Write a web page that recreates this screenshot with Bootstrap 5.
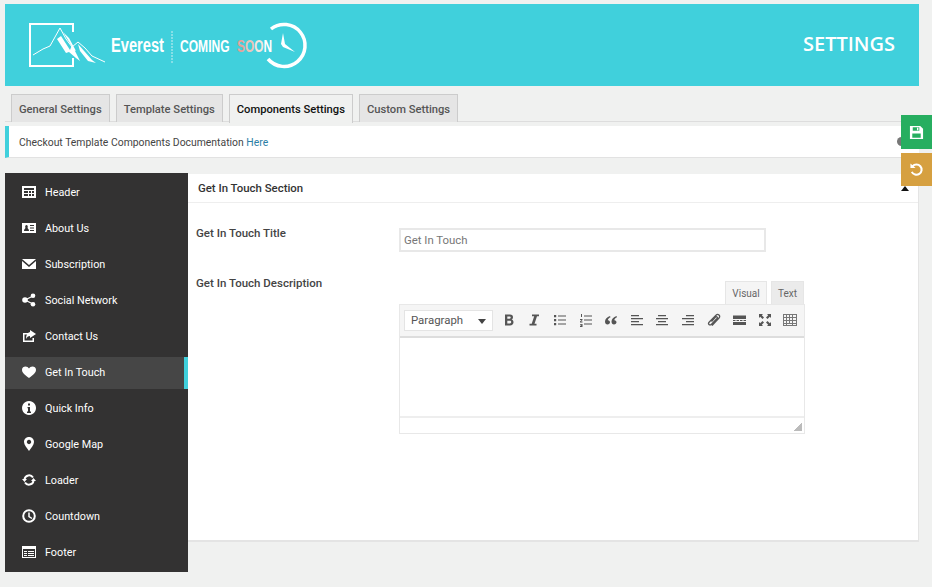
<!DOCTYPE html>
<html lang="en">
  <head>
    <meta charset="UTF-8" />
    <title>Settings</title>
    <link rel="stylesheet" href="https://cdn.jsdelivr.net/npm/bootstrap@5.3.3/dist/css/bootstrap.min.css" />
    <script src="https://cdn.jsdelivr.net/npm/bootstrap@5.3.3/dist/js/bootstrap.bundle.min.js"></script>
    <style>
      html, body { height: 587px; overflow: hidden; }
      body { background: #f0f1f0; font-family: Roboto, "Liberation Sans", sans-serif; font-size: 11px; color: #444; position: relative; }
      .page-wrap { width: 914px; margin: 4px 0 0 5px; }
      .top-banner { height: 82px; background: #40d0dc; color: #fff; padding: 0 24px 0 19px; }
      .banner-title { font-family: "Open Sans", sans-serif; font-size: 20px; font-weight: 600; margin-top: -2px; }
      .logo-narrow { font-family: "Liberation Sans", sans-serif; font-weight: 700; font-size: 17px; }
      .set-tabs { height: 36px; padding: 8px 0 0 6px; gap: 6px; border-bottom: 1px solid #ddd; }
      .set-tab { height: 28px; line-height: 29px; padding: 0 7px; background: #e5e5e5; border: 1px solid #ccc; border-bottom: 0; color: #555; font-weight: 500; font-size: 11.200px; white-space: nowrap; }
      .set-tab.on { background: #f0f1f0; color: #111; height: 29px; margin-bottom: -1px; }
      .doc-notice { height: 32px; margin-top: 4px; background: #fff; border-left: 4px solid #40d0dc; border-bottom: 1px solid #e2e2e2; padding-left: 10px; line-height: 33px; color: #444; font-size: 10.400px; }
      .doc-notice a { color: #2b7ea6; text-decoration: none; }
      .doc-dot { width: 9px; height: 9px; border-radius: 50%; background: #777; position: absolute; left: 897px; top: 137px; }
      .main-row { margin-top: 15px; }
      .side-menu { width: 183px; height: 399px; background: #333232; padding-top: 4px; flex: none; }
      .side-item { height: 32px; margin-bottom: 4px; padding: 0 0 2px 17px; gap: 9px; color: #fff; font-size: 10.800px; }
      .side-item span { padding-top: 2px; }
      .side-item svg { width: 14px; height: 14px; flex: none; }
      .side-item.on { background: #464646; border-right: 4px solid #40d0dc; }
      .right-panel { width: 731px; height: 368px; margin-top: 1px; background: #fff; border-right: 1px solid #e4e4e4; border-bottom: 2px solid #e4e4e4; position: relative; }
      .panel-head { height: 29px; line-height: 28px; padding-left: 10px; border-bottom: 1px solid #eee; font-weight: 500; font-size: 11.400px; color: #333; }
      .panel-arrow { position: absolute; left: 713px; top: 12px; width: 0; height: 0; border-left: 4px solid transparent; border-right: 4px solid transparent; border-bottom: 5px solid #111; }
      .field-row { padding-left: 8px; }
      .field-first { margin-top: 25px; }
      .field-second { margin-top: 29px; }
      .field-label { width: 203px; flex: none; font-weight: 500; font-size: 11.500px; color: #444; }
      .field-first .field-label { margin-top: -3px; }
      .field-second .field-label { margin-top: -6px; }
      .title-input { width: 367px; height: 24px; border: 2px solid #e8e8e8; padding: 0 3px; font-size: 11.400px; color: #777; line-height: 20px; }
      .ed-tabs { width: 405px; height: 23px; gap: 4px; }
      .ed-tab { height: 23px; line-height: 23px; width: 33px; text-align: center; font-size: 10px; color: #666; background: #ebebeb; border: 1px solid #e6e6e6; border-bottom: 0; }
      .ed-tab.on { background: #f5f5f5; width: 42px; }
      .ed-box { width: 406px; border: 1px solid #e8e8e8; }
      .ed-bar { height: 33px; background: #f5f5f5; border-bottom: 2px solid #ddd; padding-left: 4px; }
      .ed-select { width: 89px; height: 21px; flex: none; background: #fff; border: 1px solid #e4e4e4; color: #555; padding: 1px 6px 0; font-size: 11.400px; margin-right: 3px; }
      .ed-caret { width: 0; height: 0; border-left: 4px solid transparent; border-right: 4px solid transparent; border-top: 5px solid #444; }
      .ed-btn { width: 25.600px; text-align: center; flex: none; }
      .ed-btn svg { width: 14px; height: 14px; }
      .ed-body { height: 78px; background: #fff; }
      .ed-foot { height: 17px; border-top: 2px solid #eee; position: relative; }
      .ed-grip { position: absolute; right: 2px; bottom: 2px; width: 8px; height: 8px; background: linear-gradient(135deg, transparent 50%, #bbb 50%); }
      .float-btn { position: absolute; left: 901px; width: 31px; }
      .float-btn svg { width: 15px; height: 15px; }
      .float-save { top: 115px; height: 34px; background: #27ae60; }
      .float-reset { top: 153px; height: 33px; background: #d6a040; }
    </style>
  </head>
  <body>
    <div class="page-wrap">
      <header class="top-banner d-flex align-items-center justify-content-between">
        <svg width="285" height="50" viewBox="24 19 285 50" fill="none">
          <path d="M73 31V23H30V65H73V57" stroke="#fff" stroke-width="2" />
          <path d="M33 54L43 48 50 45 60 27 66 38 72 46 78 41 85 47 92 55 105 61" stroke="#fff" stroke-width="1" />
          <path d="M57 38L61 35 70 49 72 44 80 60 76 57 69 51 66 52zM63 31L69 37 76 50 74 49zM78 43L92 59 96 62 88 60 80 50z" fill="#fff" />
          <text x="111" y="51" font-family="Liberation Sans, sans-serif" font-weight="700" font-size="20" fill="#fff" textLength="53" lengthAdjust="spacingAndGlyphs">Everest</text>
          <path d="M172 30V62" stroke="#cdeff2" stroke-width="1" stroke-dasharray="2 1" />
          <text class="logo-narrow" transform="translate(180 51) scale(.71 1)" fill="#fff">COMING</text>
          <text class="logo-narrow" transform="translate(237 51) scale(.7 1)"><tspan fill="#e5a39a">S</tspan><tspan fill="#eac4b8">O</tspan><tspan fill="#f3e6df">O</tspan><tspan fill="#fff">N</tspan></text>
          <path d="M271 28A21 21 0 1 1 268 58" stroke="#fff" stroke-width="3.500" />
          <path d="M283 32l2 11 10 8-12-5-2-3z" fill="#fff" />
        </svg>
        <div class="banner-title">SETTINGS</div>
      </header>
      <nav class="set-tabs d-flex">
        <div class="set-tab">General Settings</div>
        <div class="set-tab">Template Settings</div>
        <div class="set-tab on">Components Settings</div>
        <div class="set-tab">Custom Settings</div>
      </nav>
      <div class="doc-notice">Checkout Template Components Documentation <a href="#">Here</a></div>
      <div class="main-row d-flex align-items-start">
        <div class="side-menu">
          <div class="side-item d-flex align-items-center">
            <svg viewBox="0 0 14 14"><path fill="#fff" fill-rule="evenodd" d="M0 1h14v12H0zM2 3v2h10V3zM2 6v2h4V6zM7 6v2h2V6zM10 6v2h2V6zM2 9v2h4V9zM7 9v2h2V9zM10 9v2h2V9z" /></svg>
            <span>Header</span>
          </div>
          <div class="side-item d-flex align-items-center">
            <svg viewBox="0 0 14 14"><path fill="#fff" fill-rule="evenodd" d="M0 2h14v10H0zM2 10h5c0-2-1-2-1.500-3 .8-1.500 0-3-1-3s-1.800 1.500-1 3C3 8 2 8 2 10zM8 4v1h4V4zM8 6.500v1h4v-1zM8 9v1h4V9z" /></svg>
            <span>About Us</span>
          </div>
          <div class="side-item d-flex align-items-center">
            <svg viewBox="0 0 14 14"><path fill="#fff" d="M0 2h14L7 8zM0 4l7 6 7-6v8H0z" /></svg>
            <span>Subscription</span>
          </div>
          <div class="side-item d-flex align-items-center">
            <svg viewBox="0 0 14 14"><circle cx="3" cy="7" r="2.800" fill="#fff" /><circle cx="11" cy="2.800" r="2.300" fill="#fff" /><circle cx="11" cy="11.200" r="2.300" fill="#fff" /><path d="M3 7l8-4M3 7l8 4" stroke="#fff" stroke-width="1.200" /></svg>
            <span>Social Network</span>
          </div>
          <div class="side-item d-flex align-items-center">
            <svg viewBox="0 0 14 14"><path fill="#fff" d="M1 4h5v1.500H2.500v6h8V9H12v4H1zM8 1l6 4-6 4V7C6 7 5 8 4 10c0-4 1.500-6.500 4-7z" /></svg>
            <span>Contact Us</span>
          </div>
          <div class="side-item on d-flex align-items-center">
            <svg viewBox="0 0 14 14"><path fill="#fff" d="M7 13C2 9.500 0 7.500 0 4.800 0 2.500 1.800 1.500 3.500 1.500 5 1.500 6.300 2.300 7 3.500 7.700 2.300 9 1.500 10.500 1.500 12.200 1.500 14 2.500 14 4.800 14 7.500 12 9.500 7 13z" /></svg>
            <span>Get In Touch</span>
          </div>
          <div class="side-item d-flex align-items-center">
            <svg viewBox="0 0 14 14"><path fill="#fff" fill-rule="evenodd" d="M7 0a7 7 0 1 0 .01 0zM6 2.500h2v2H6zM5.500 6H8v4.500h1V12H5v-1.500h1V7.300h-.5z" /></svg>
            <span>Quick Info</span>
          </div>
          <div class="side-item d-flex align-items-center">
            <svg viewBox="0 0 14 14"><path fill="#fff" fill-rule="evenodd" d="M7 0c3 0 5 2.200 5 5 0 3-3 6-5 9-2-3-5-6-5-9 0-2.800 2-5 5-5zM7 2.800a2.200 2.200 0 1 0 .01 0z" /></svg>
            <span>Google Map</span>
          </div>
          <div class="side-item d-flex align-items-center">
            <svg viewBox="0 0 14 14" fill="none"><path d="M2.500 6A4.700 4.700 0 0 1 11 4.500M11.500 8A4.700 4.700 0 0 1 3 9.500" stroke="#fff" stroke-width="2" /><path fill="#fff" d="M0 6h5L2.500 9zM9 8h5l-2.500-3z" /></svg>
            <span>Loader</span>
          </div>
          <div class="side-item d-flex align-items-center">
            <svg viewBox="0 0 14 14" fill="none"><circle cx="7" cy="7" r="5.800" stroke="#fff" stroke-width="2" /><path d="M7 3.500V7.500L10 9.500" stroke="#fff" stroke-width="1.500" /></svg>
            <span>Countdown</span>
          </div>
          <div class="side-item d-flex align-items-center">
            <svg viewBox="0 0 14 14"><path fill="#fff" fill-rule="evenodd" d="M0 1h14v12H0zM1 4v8h12V4zM2 6h3v1H2zM6 6h6v1H6zM2 8h3v1H2zM6 8h6v1H6zM2 10h3v1H2zM6 10h6v1H6z" /></svg>
            <span>Footer</span>
          </div>
        </div>
        <section class="right-panel">
          <div class="panel-head">Get In Touch Section</div>
          <div class="panel-arrow"></div>
          <div class="field-row field-first d-flex">
            <div class="field-label">Get In Touch Title</div>
            <div class="title-input">Get In Touch</div>
          </div>
          <div class="field-row field-second d-flex">
            <div class="field-label">Get In Touch Description</div>
            <div>
              <div class="ed-tabs d-flex justify-content-end">
                <div class="ed-tab on">Visual</div>
                <div class="ed-tab">Text</div>
              </div>
              <div class="ed-box">
                <div class="ed-bar d-flex align-items-center">
                  <div class="ed-select d-flex align-items-center justify-content-between"><span>Paragraph</span><span class="ed-caret"></span></div>
                  <div class="ed-btn"><svg viewBox="0 0 14 14"><path fill="#555" fill-rule="evenodd" d="M3 1.500h5c2 0 3 1 3 2.700 0 1.100-.6 2-1.500 2.400 1.300.3 2 1.300 2 2.700 0 2-1.300 3.200-3.500 3.200H3zM5.300 3.500v2.300h2.200c.8 0 1.200-.5 1.200-1.200 0-.7-.4-1.100-1.200-1.100zM5.300 7.700v2.800h2.600c.9 0 1.300-.6 1.300-1.400 0-.9-.5-1.400-1.400-1.400z" /></svg></div>
                  <div class="ed-btn"><svg viewBox="0 0 14 14"><path fill="#555" d="M5 1.500h7v1.800H10L7.500 10.700h2V12.500H2.500v-1.800h2.200L7.200 3.300H5z" /></svg></div>
                  <div class="ed-btn"><svg viewBox="0 0 14 14"><path fill="#555" d="M1 2h2.200v2.200H1zM1 6h2.200v2.200H1zM1 10h2.200v2.200H1zM5 2.500h8v1H5zM5 6.500h8v1H5zM5 10.500h8v1H5z" /></svg></div>
                  <div class="ed-btn"><svg viewBox="0 0 14 14"><path fill="#555" d="M2 1h1v3H2zM1 6h2.500v1L2 8.500h1.500v1H1v-1L2.500 7H1zM1 11h2.500v3H1v-1h1.500v-.3H1.500v-.7h1v-.2H1zM5 2.500h8v1H5zM5 6.500h8v1H5zM5 10.500h8v1H5z" /></svg></div>
                  <div class="ed-btn"><svg viewBox="0 0 14 14"><path fill="#555" d="M6 3C3 4 1 6 1 8.500 1 10.500 2 11.500 3.500 11.500S6 10.500 6 9.300 5 7 3.800 7.200C4 6 5 5 6.500 4.300zM12.500 3C9.500 4 7.500 6 7.500 8.500c0 2 1 3 2.500 3s2.500-1 2.500-2.200S11.500 7 10.300 7.200C10.500 6 11.500 5 13 4.300z" /></svg></div>
                  <div class="ed-btn"><svg viewBox="0 0 14 14"><path fill="#555" d="M1 2h8v1.300H1zM1 5h12v1.300H1zM1 8h8v1.300H1zM1 11h12v1.300H1z" /></svg></div>
                  <div class="ed-btn"><svg viewBox="0 0 14 14"><path fill="#555" d="M3 2h8v1.300H3zM1 5h12v1.300H1zM3 8h8v1.300H3zM1 11h12v1.300H1z" /></svg></div>
                  <div class="ed-btn"><svg viewBox="0 0 14 14"><path fill="#555" d="M5 2h8v1.300H5zM1 5h12v1.300H1zM5 8h8v1.300H5zM1 11h12v1.300H1z" /></svg></div>
                  <div class="ed-btn"><svg viewBox="0 0 14 14" fill="none"><path d="M5 12.500l7-7.500c1-1.100.8-2.300 0-3s-2-.8-3 .2L2.300 9c-1 1-.8 2-.3 2.500s1.500.7 2.500-.3L10 5.500c.5-.6.400-1.100 0-1.500s-1-.4-1.500.1L4.500 8.500" stroke="#555" stroke-width="1.300" /></svg></div>
                  <div class="ed-btn"><svg viewBox="0 0 14 14"><path fill="#555" d="M1 2.500h13v3.500H1zM1 7h2.500v1H1zM4.500 7H7v1H4.500zM8 7h2.500v1H8zM11.500 7H14v1h-2.500zM1 9h13v3H1z" /></svg></div>
                  <div class="ed-btn"><svg viewBox="0 0 14 14"><path fill="#555" d="M1 1h4L3.800 2.200 6 4.500 4.500 6 2.200 3.800 1 5zM13 1v4l-1.200-1.200L9.500 6 8 4.500l2.200-2.300L9 1zM1 13V9l1.200 1.200L4.500 8 6 9.500l-2.200 2.300L5 13zM13 13H9l1.200-1.200L8 9.500 9.500 8l2.300 2.200L13 9z" /></svg></div>
                  <div class="ed-btn"><svg viewBox="0 0 14 14"><path fill="#777" fill-rule="evenodd" d="M0 1h14v12H0zM1 2v2h2V2zM4 2v2h2V2zM7 2v2h2V2zM10 2v2h3V2zM1 5v2h2V5zM4 5v2h2V5zM7 5v2h2V5zM10 5v2h3V5zM1 8v2h2V8zM4 8v2h2V8zM7 8v2h2V8zM10 8v2h3V8zM1 11v1h2v-1zM4 11v1h5v-1zM10 11v1h3v-1z" /></svg></div>
                </div>
                <div class="ed-body"></div>
                <div class="ed-foot"><div class="ed-grip"></div></div>
              </div>
            </div>
          </div>
        </section>
      </div>
    </div>
    <div class="doc-dot"></div>
    <div class="float-btn float-save d-flex align-items-center justify-content-center">
      <svg viewBox="0 0 16 16"><path fill="#fff" fill-rule="evenodd" d="M1 1h11l3 3v11H1zM4 2.500V6h7V2.500zM8.500 3H10v2.500H8.500zM3.500 9v4.500h9V9z" /></svg>
    </div>
    <div class="float-btn float-reset d-flex align-items-center justify-content-center">
      <svg viewBox="0 0 16 16" fill="none"><path d="M3.800 4.500A5.500 5.500 0 1 1 3 10.500" stroke="#fff" stroke-width="2.200" /><path fill="#fff" d="M1.500 1.500l5.500 5H1.500z" /></svg>
    </div>
  </body>
</html>
